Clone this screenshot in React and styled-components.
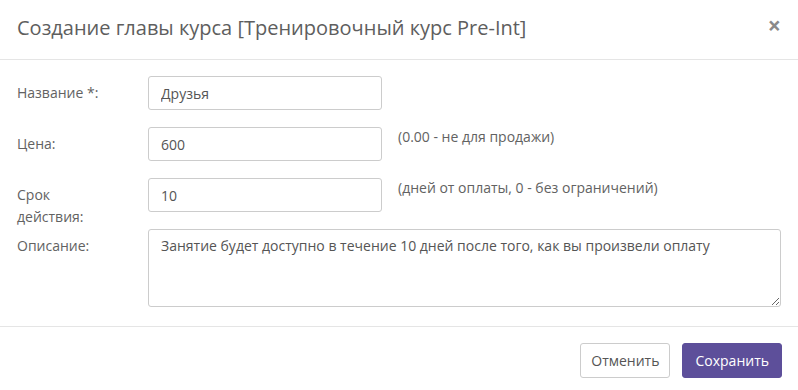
import React from "react";
import styled, { createGlobalStyle } from "styled-components";

const Global = createGlobalStyle`
  html, body { margin: 0; padding: 0; background: #fff; }
  body { font-family: "Open Sans", "Liberation Sans", sans-serif; color: #626262; }
  * { box-sizing: border-box; }
`;

const Modal = styled.div`
  width: 798px;
  height: 390px;
  background: #fff;
  display: flex;
  flex-direction: column;
`;

const Header = styled.div`
  display: flex;
  align-items: center;
  justify-content: space-between;
  height: 60px;
  padding: 0 17px 4px 17px;
  border-bottom: 1px solid #e5e5e5;
`;

const Title = styled.h4`
  margin: 0;
  font-size: 20px;
  font-weight: 400;
  color: #5e5e5e;
`;

const Close = styled.button`
  border: 0;
  background: none;
  padding: 0;
  margin-top: -5px;
  font-family: "Open Sans", sans-serif;
  font-size: 23px;
  font-weight: 700;
  line-height: 1;
  color: #8a8a8a;
  cursor: pointer;
`;

const Body = styled.div`
  padding: 16px 17px 19px;
  display: flex;
  flex-direction: column;
  gap: 17px;
  border-bottom: 1px solid #e5e5e5;
`;

const Row = styled.div`
  display: grid;
  grid-template-columns: 115px 234px 1fr;
  column-gap: 16px;
  align-items: start;
`;

const WideRow = styled(Row)`
  grid-template-columns: 115px 1fr;
  margin-top: -16px;
`;

const Label = styled.label`
  font-size: 14px;
  line-height: 22px;
  padding-top: 6px;
  width: 100px;
`;

const Input = styled.input`
  width: 100%;
  height: 34px;
  border: 1px solid #ccc;
  border-radius: 3px;
  padding: 0 12px;
  font-family: "Open Sans", sans-serif;
  font-size: 14px;
  color: #555;
  outline: none;
`;

const TextArea = styled.textarea`
  width: 100%;
  height: 78px;
  border: 1px solid #ccc;
  border-radius: 3px;
  padding: 6px 12px;
  font-family: "Open Sans", sans-serif;
  font-size: 14px;
  line-height: 20px;
  color: #555;
  outline: none;
  resize: vertical;
`;

const Help = styled.span`
  font-size: 14px;
  line-height: 20px;
`;

const Footer = styled.div`
  display: flex;
  justify-content: flex-end;
  gap: 12px;
  padding: 16px 16px 0;
`;

const Button = styled.button`
  height: 35px;
  padding: 0 ${(p) => (p.primary ? 12 : 10)}px;
  border-radius: 3px;
  font-family: "Open Sans", sans-serif;
  font-size: 14px;
  cursor: pointer;
  border: 1px solid ${(p) => (p.primary ? "#5d4f9a" : "#ccc")};
  background: ${(p) => (p.primary ? "#5d4f9a" : "#fff")};
  color: ${(p) => (p.primary ? "#fff" : "#555")};
`;

export default function App() {
  return (
    <>
      <Global />
      <Modal>
        <Header>
          <Title>Создание главы курса [Тренировочный курс Pre-Int]</Title>
          <Close aria-label="Закрыть">×</Close>
        </Header>
        <Body>
          <Row>
            <Label>Название *:</Label>
            <Input defaultValue="Друзья" />
          </Row>
          <Row>
            <Label>Цена:</Label>
            <Input defaultValue="600" />
            <Help>(0.00 - не для продажи)</Help>
          </Row>
          <Row>
            <Label>Срок действия:</Label>
            <Input defaultValue="10" />
            <Help>(дней от оплаты, 0 - без ограничений)</Help>
          </Row>
          <WideRow>
            <Label>Описание:</Label>
            <TextArea defaultValue="Занятие будет доступно в течение 10 дней после того, как вы произвели оплату" />
          </WideRow>
        </Body>
        <Footer>
          <Button>Отменить</Button>
          <Button primary>Сохранить</Button>
        </Footer>
      </Modal>
    </>
  );
}
